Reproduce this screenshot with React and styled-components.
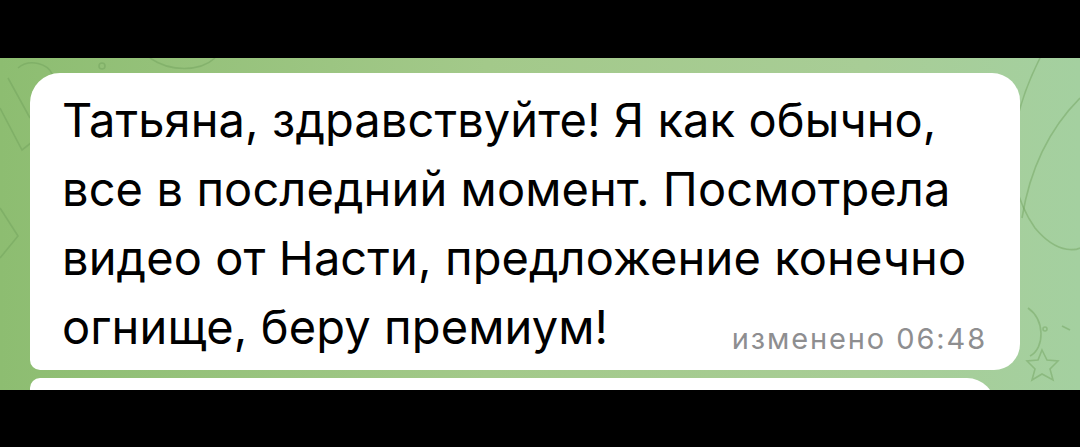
import styled, { createGlobalStyle } from "styled-components";

const GlobalStyle = createGlobalStyle`
  html, body {
    margin: 0;
    padding: 0;
    background: #000;
  }
  body {
    font-family: Inter, "Noto Sans", "Liberation Sans", sans-serif;
  }
`;

const Wallpaper = () => (
  <WallpaperSvg viewBox="0 0 1080 332" preserveAspectRatio="none">
    <g fill="none" stroke="#6f9f5c" strokeOpacity="0.45" strokeWidth="1.6">
      <path d="M0 50 L22 92 L50 70" />
      <path d="M8 20 L30 60 M18 10 C30 0 48 6 52 16" />
      <path d="M0 150 L18 178 L0 200" />
      <circle cx="102" cy="8" r="3" />
      <path d="M150 0 C170 14 200 14 215 0" />
      <path d="M1040 0 C1010 60 1000 120 1035 170 C1060 200 1080 190 1080 190" />
      <path d="M1080 40 C1050 70 1030 110 1022 160" />
      <path d="M1028 250 C1045 262 1045 290 1030 298" />
      <circle cx="1045" cy="271" r="2" />
      <path d="M1062 268 L1070 272" />
      <path d="M1042 292 L1047 302 L1058 303 L1050 311 L1053 322 L1042 316 L1032 322 L1035 311 L1027 303 L1038 302 Z" />
    </g>
  </WallpaperSvg>
);

const App = () => {
  return (
    <>
      <GlobalStyle />
      <Screen>
        <BlackBar $height={58} />
        <Chat>
          <Wallpaper />
          <Bubble $position="first">
            <Line>Татьяна, здравствуйте! Я как обычно,</Line>
            <Line>все в последний момент. Посмотрела</Line>
            <Line>видео от Насти, предложение конечно</Line>
            <LastLine>
              <span>огнище, беру премиум!</span>
              <Meta>изменено 06:48</Meta>
            </LastLine>
          </Bubble>
          <Bubble $position="next" />
        </Chat>
        <BlackBar $height={57} />
      </Screen>
    </>
  );
};

const Screen = styled.div`
  width: 1080px;
  height: 447px;
  display: flex;
  flex-direction: column;
  background: #000;
  overflow: hidden;
`;

const BlackBar = styled.div`
  height: ${(p) => p.$height}px;
  flex-shrink: 0;
  background: #000;
`;

const Chat = styled.div`
  position: relative;
  height: 332px;
  flex-shrink: 0;
  overflow: hidden;
  display: flex;
  flex-direction: column;
  gap: 8px;
  padding: 15px 60px 0 30px;
  box-sizing: border-box;
  background: linear-gradient(90deg, #8dbd71 0%, #a3c98a 45%, #a8cd96 80%, #a4d0a0 100%);
`;

const WallpaperSvg = styled.svg`
  position: absolute;
  inset: 0;
  width: 100%;
  height: 100%;
  pointer-events: none;
`;

const Bubble = styled.div`
  position: relative;
  flex-shrink: 0;
  background: #fff;
  box-sizing: border-box;
  ${(p) =>
    p.$position === "first"
      ? `
    border-radius: 30px 28px 26px 10px;
    padding: 12px 35px 9px 32px;
  `
      : `
    height: 60px;
    margin-right: 25px;
    border-radius: 10px 28px 28px 10px;
  `}
`;

const Line = styled.div`
  font-size: 47px;
  line-height: 69px;
  color: #000;
  white-space: nowrap;
  letter-spacing: 0.1px;
`;

const LastLine = styled(Line)`
  display: flex;
  justify-content: space-between;
  align-items: baseline;
`;

const Meta = styled.span`
  font-size: 29px;
  line-height: 1;
  color: #8e8e90;
  letter-spacing: 1.9px;
  position: relative;
  top: 5px;
  margin-right: -2px;
`;

export default App;
